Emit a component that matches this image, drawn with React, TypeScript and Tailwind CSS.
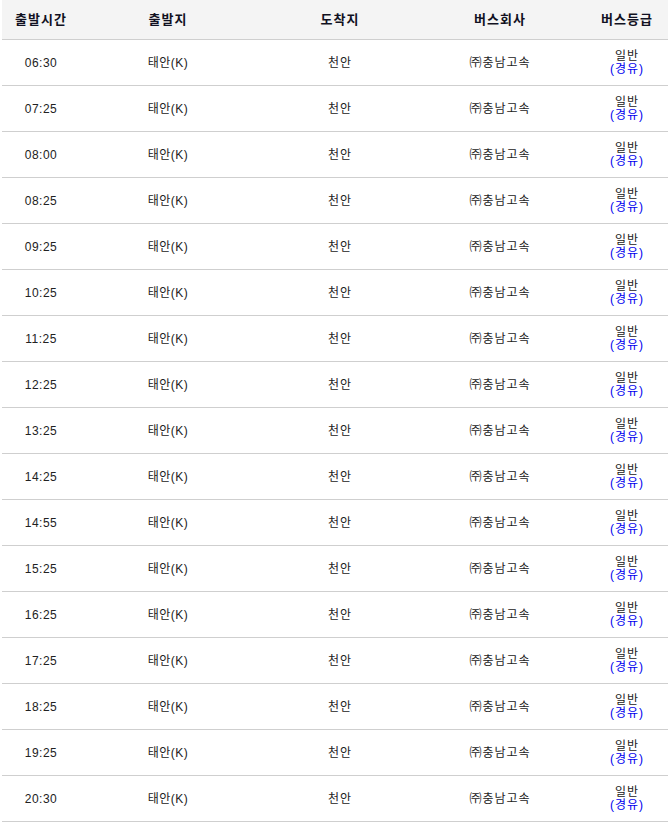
import React from "react";

const times = ["06:30","07:25","08:00","08:25","09:25","10:25","11:25","12:25","13:25","14:25","14:55","15:25","16:25","17:25","18:25","19:25","20:30"];

const cols = "grid grid-cols-[78px_176px_168px_152px_102px]";
const font = { fontFamily: '"Liberation Sans", "Noto Sans CJK KR", sans-serif' };

export default function App() {
  return (
    <div className="w-[668px] h-[824px] overflow-hidden bg-white" style={font}>
      <div className="ml-[2px] w-[676px]">
        <div className={`${cols} h-[40px] bg-[#f4f4f4] border-b border-[#cfcfcf] items-center text-[13px] font-bold text-[#111122] tracking-[1px]`}>
          <div className="text-center">출발시간</div>
          <div className="text-center">출발지</div>
          <div className="text-center">도착지</div>
          <div className="text-center">버스회사</div>
          <div className="text-center">버스등급</div>
        </div>
        {times.map((t) => (
          <div key={t} className={`${cols} h-[46px] border-b border-[#cfcfcf] items-center text-[12px] text-[#222]`}>
            <div className="text-center tracking-[0.5px]">{t}</div>
            <div className="text-center tracking-[0.5px]">태안(K)</div>
            <div className="text-center tracking-[1px]">천안</div>
            <div className="text-center tracking-[1px]">㈜충남고속</div>
            <div className="flex flex-col items-center leading-[13px]">
              <span className="tracking-[1px]">일반</span>
              <span className="text-[#0000ee] tracking-[1px]">(경유)</span>
            </div>
          </div>
        ))}
      </div>
    </div>
  );
}
